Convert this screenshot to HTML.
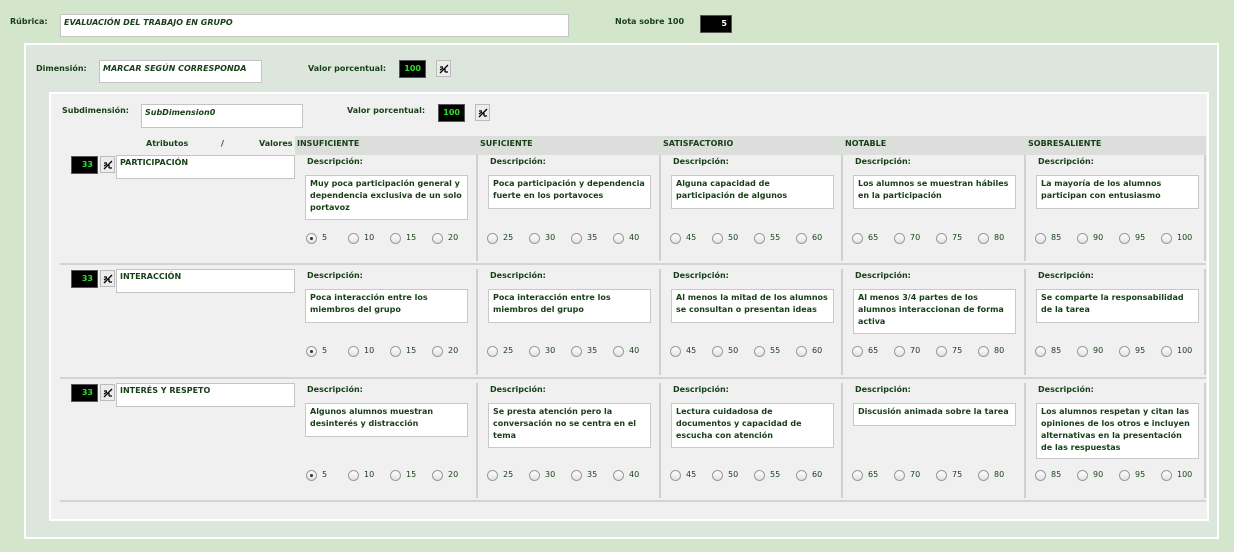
<!DOCTYPE html>
<html><head><meta charset="utf-8"><style>
*{margin:0;padding:0;box-sizing:border-box}
body{width:1234px;height:552px;background:#d3e5ca;font-family:"DejaVu Sans","Liberation Sans",sans-serif;font-weight:bold;font-size:8px;color:#173f17;position:relative;overflow:hidden}
.a{position:absolute}
.in{position:absolute;background:#fff;border:1px solid #c4c4c4;padding:3px 3px;font-style:italic;white-space:nowrap}
.num{position:absolute;background:#000;color:#2be02b;text-align:right;padding:3px 4px 0 0;border:1px solid #555;font-size:8px}
.btn{position:absolute;width:15px;height:17px;background:#ececec;border:1px solid #bbb}
.btn svg{position:absolute;left:2px;top:3px}
.p1{position:absolute;left:24px;top:43px;width:1195px;height:496px;background:#dde6dc;border:2px solid #fff}
.p2{position:absolute;left:49px;top:92px;width:1160px;height:429px;background:#f0f0f0;border:2px solid #fff}
.hdr{position:absolute;left:295px;top:136px;width:911px;height:19px;background:#dcdedb}
.sep{position:absolute;left:60px;width:1146px;height:2px;background:#d3d3d3}
.row{position:absolute;left:0;width:1234px}
.cell{position:absolute;top:0;width:183px;border-left:2px solid #d0d0d0}
.lb{position:absolute;left:10px;top:2px}
.bx{position:absolute;left:8px;top:20px;width:163px;background:#fff;border:1px solid #c8c8c8;padding:2px 4px;line-height:12px;min-height:34px}
.rd{position:absolute;left:9px;width:170px;font-size:8px;font-weight:normal}
.rd span{position:absolute;top:-6px}
.rd i{position:absolute;top:-6px;width:11px;height:11px;border-radius:50%;border:1px solid #9a9a9a;background:linear-gradient(#fff,#e2e2e2)}
.rd i.on::after{content:"";position:absolute;left:3px;top:3px;width:3px;height:3px;border-radius:50%;background:#333}
.at{position:absolute;left:116px;top:0;width:179px;height:24px;background:#fff;border:1px solid #c4c4c4;padding:2px 3px}
</style></head><body>
<svg width="0" height="0" style="position:absolute"><defs><symbol id="pc" viewBox="0 0 10 10"><path d="M1 9L9 1M1 3H4M6 5V8M6 8H9M1 6L4 4" stroke="#000" stroke-width="1.3" fill="none"/></symbol></defs></svg>
<div class="a" style="left:10px;top:17px">Rúbrica:</div>
<div class="in" style="left:60px;top:14px;width:509px;height:23px">EVALUACIÓN DEL TRABAJO EN GRUPO</div>
<div class="a" style="left:615px;top:17px">Nota sobre 100</div>
<div class="num" style="left:700px;top:15px;width:32px;height:18px;color:#fff">5</div>
<div class="p1"></div>
<div class="a" style="left:36px;top:64px">Dimensión:</div>
<div class="in" style="left:99px;top:60px;width:163px;height:23px">MARCAR SEGÚN CORRESPONDA</div>
<div class="a" style="left:308px;top:64px">Valor porcentual:</div>
<div class="num" style="left:399px;top:60px;width:27px;height:18px">100</div>
<div class="btn" style="left:436px;top:60px"><svg width="10" height="10"><use href="#pc"/></svg></div>
<div class="p2"></div>
<div class="a" style="left:62px;top:106px">Subdimensión:</div>
<div class="in" style="left:141px;top:104px;width:162px;height:24px">SubDimension0</div>
<div class="a" style="left:347px;top:106px">Valor porcentual:</div>
<div class="num" style="left:438px;top:104px;width:27px;height:18px">100</div>
<div class="btn" style="left:475px;top:104px"><svg width="10" height="10"><use href="#pc"/></svg></div>
<div class="hdr"></div>
<div class="a" style="left:146px;top:139px">Atributos</div>
<div class="a" style="left:221px;top:139px">/</div>
<div class="a" style="left:259px;top:139px">Valores</div>
<div class="a" style="left:297px;top:139px">INSUFICIENTE</div>
<div class="a" style="left:480px;top:139px">SUFICIENTE</div>
<div class="a" style="left:663px;top:139px">SATISFACTORIO</div>
<div class="a" style="left:845px;top:139px">NOTABLE</div>
<div class="a" style="left:1028px;top:139px">SOBRESALIENTE</div>

<!-- Row 1 -->
<div class="row" style="top:155px">
<div class="num" style="left:71px;top:1px;width:27px;height:18px">33</div>
<div class="btn" style="left:100px;top:1px"><svg width="10" height="10"><use href="#pc"/></svg></div>
<div class="at">PARTICIPACIÓN</div>
<div class="cell" style="left:297px;height:106px;border-left:none"><div class="lb">Descripción:</div><div class="bx" style="height:45px">Muy poca participación general y dependencia exclusiva de un solo portavoz</div><div class="rd" style="top:84px"><i class="on" style="left:0"></i><span style="left:16px">5</span><i style="left:42px"></i><span style="left:58px">10</span><i style="left:84px"></i><span style="left:100px">15</span><i style="left:126px"></i><span style="left:142px">20</span></div></div>
<div class="cell" style="left:476px;height:106px"><div class="lb" style="left:12px">Descripción:</div><div class="bx" style="left:10px">Poca participación y dependencia fuerte en los portavoces</div><div class="rd" style="top:84px"><i style="left:0"></i><span style="left:16px">25</span><i style="left:42px"></i><span style="left:58px">30</span><i style="left:84px"></i><span style="left:100px">35</span><i style="left:126px"></i><span style="left:142px">40</span></div></div>
<div class="cell" style="left:659px;height:106px"><div class="lb" style="left:12px">Descripción:</div><div class="bx" style="left:10px">Alguna capacidad de participación de algunos</div><div class="rd" style="top:84px"><i style="left:0"></i><span style="left:16px">45</span><i style="left:42px"></i><span style="left:58px">50</span><i style="left:84px"></i><span style="left:100px">55</span><i style="left:126px"></i><span style="left:142px">60</span></div></div>
<div class="cell" style="left:841px;height:106px"><div class="lb" style="left:12px">Descripción:</div><div class="bx" style="left:10px">Los alumnos se muestran hábiles en la participación</div><div class="rd" style="top:84px"><i style="left:0"></i><span style="left:16px">65</span><i style="left:42px"></i><span style="left:58px">70</span><i style="left:84px"></i><span style="left:100px">75</span><i style="left:126px"></i><span style="left:142px">80</span></div></div>
<div class="cell" style="left:1024px;height:106px"><div class="lb" style="left:12px">Descripción:</div><div class="bx" style="left:10px">La mayoría de los alumnos participan con entusiasmo</div><div class="rd" style="top:84px"><i style="left:0"></i><span style="left:16px">85</span><i style="left:42px"></i><span style="left:58px">90</span><i style="left:84px"></i><span style="left:100px">95</span><i style="left:126px"></i><span style="left:142px">100</span></div></div>
<div class="a" style="left:1204px;top:0;width:2px;height:106px;background:#d0d0d0"></div>
</div>
<div class="sep" style="top:263px"></div>

<!-- Row 2 -->
<div class="row" style="top:269px">
<div class="num" style="left:71px;top:1px;width:27px;height:18px">33</div>
<div class="btn" style="left:100px;top:1px"><svg width="10" height="10"><use href="#pc"/></svg></div>
<div class="at">INTERACCIÓN</div>
<div class="cell" style="left:297px;height:106px;border-left:none"><div class="lb">Descripción:</div><div class="bx">Poca interacción entre los miembros del grupo</div><div class="rd" style="top:83px"><i class="on" style="left:0"></i><span style="left:16px">5</span><i style="left:42px"></i><span style="left:58px">10</span><i style="left:84px"></i><span style="left:100px">15</span><i style="left:126px"></i><span style="left:142px">20</span></div></div>
<div class="cell" style="left:476px;height:106px"><div class="lb" style="left:12px">Descripción:</div><div class="bx" style="left:10px">Poca interacción entre los miembros del grupo</div><div class="rd" style="top:83px"><i style="left:0"></i><span style="left:16px">25</span><i style="left:42px"></i><span style="left:58px">30</span><i style="left:84px"></i><span style="left:100px">35</span><i style="left:126px"></i><span style="left:142px">40</span></div></div>
<div class="cell" style="left:659px;height:106px"><div class="lb" style="left:12px">Descripción:</div><div class="bx" style="left:10px">Al menos la mitad de los alumnos se consultan o presentan ideas</div><div class="rd" style="top:83px"><i style="left:0"></i><span style="left:16px">45</span><i style="left:42px"></i><span style="left:58px">50</span><i style="left:84px"></i><span style="left:100px">55</span><i style="left:126px"></i><span style="left:142px">60</span></div></div>
<div class="cell" style="left:841px;height:106px"><div class="lb" style="left:12px">Descripción:</div><div class="bx" style="left:10px;height:45px">Al menos 3/4 partes de los alumnos interaccionan de forma activa</div><div class="rd" style="top:83px"><i style="left:0"></i><span style="left:16px">65</span><i style="left:42px"></i><span style="left:58px">70</span><i style="left:84px"></i><span style="left:100px">75</span><i style="left:126px"></i><span style="left:142px">80</span></div></div>
<div class="cell" style="left:1024px;height:106px"><div class="lb" style="left:12px">Descripción:</div><div class="bx" style="left:10px">Se comparte la responsabilidad de la tarea</div><div class="rd" style="top:83px"><i style="left:0"></i><span style="left:16px">85</span><i style="left:42px"></i><span style="left:58px">90</span><i style="left:84px"></i><span style="left:100px">95</span><i style="left:126px"></i><span style="left:142px">100</span></div></div>
<div class="a" style="left:1204px;top:0;width:2px;height:106px;background:#d0d0d0"></div>
</div>
<div class="sep" style="top:377px"></div>

<!-- Row 3 -->
<div class="row" style="top:383px">
<div class="num" style="left:71px;top:1px;width:27px;height:18px">33</div>
<div class="btn" style="left:100px;top:1px"><svg width="10" height="10"><use href="#pc"/></svg></div>
<div class="at">INTERÉS Y RESPETO</div>
<div class="cell" style="left:297px;height:115px;border-left:none"><div class="lb">Descripción:</div><div class="bx">Algunos alumnos muestran desinterés y distracción</div><div class="rd" style="top:93px"><i class="on" style="left:0"></i><span style="left:16px">5</span><i style="left:42px"></i><span style="left:58px">10</span><i style="left:84px"></i><span style="left:100px">15</span><i style="left:126px"></i><span style="left:142px">20</span></div></div>
<div class="cell" style="left:476px;height:115px"><div class="lb" style="left:12px">Descripción:</div><div class="bx" style="left:10px;height:45px">Se presta atención pero la conversación no se centra en el tema</div><div class="rd" style="top:93px"><i style="left:0"></i><span style="left:16px">25</span><i style="left:42px"></i><span style="left:58px">30</span><i style="left:84px"></i><span style="left:100px">35</span><i style="left:126px"></i><span style="left:142px">40</span></div></div>
<div class="cell" style="left:659px;height:115px"><div class="lb" style="left:12px">Descripción:</div><div class="bx" style="left:10px;height:45px">Lectura cuidadosa de documentos y capacidad de escucha con atención</div><div class="rd" style="top:93px"><i style="left:0"></i><span style="left:16px">45</span><i style="left:42px"></i><span style="left:58px">50</span><i style="left:84px"></i><span style="left:100px">55</span><i style="left:126px"></i><span style="left:142px">60</span></div></div>
<div class="cell" style="left:841px;height:115px"><div class="lb" style="left:12px">Descripción:</div><div class="bx" style="left:10px;min-height:22px;height:23px">Discusión animada sobre la tarea</div><div class="rd" style="top:93px"><i style="left:0"></i><span style="left:16px">65</span><i style="left:42px"></i><span style="left:58px">70</span><i style="left:84px"></i><span style="left:100px">75</span><i style="left:126px"></i><span style="left:142px">80</span></div></div>
<div class="cell" style="left:1024px;height:115px"><div class="lb" style="left:12px">Descripción:</div><div class="bx" style="left:10px;height:56px">Los alumnos respetan y citan las opiniones de los otros e incluyen alternativas en la presentación de las respuestas</div><div class="rd" style="top:93px"><i style="left:0"></i><span style="left:16px">85</span><i style="left:42px"></i><span style="left:58px">90</span><i style="left:84px"></i><span style="left:100px">95</span><i style="left:126px"></i><span style="left:142px">100</span></div></div>
<div class="a" style="left:1204px;top:0;width:2px;height:115px;background:#d0d0d0"></div>
</div>
<div class="sep" style="top:500px"></div>
</body></html>
